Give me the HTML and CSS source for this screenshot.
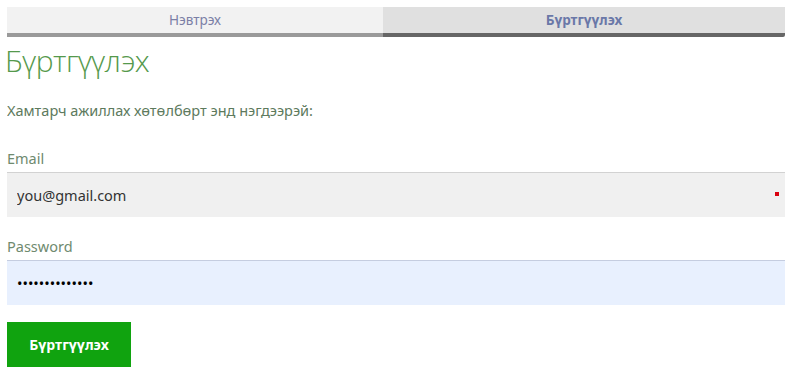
FILE: index.html
```html
<!DOCTYPE html>
<html lang="mn">
<head>
    <meta charset="UTF-8">
    <meta name="viewport" content="width=device-width, initial-scale=1.0">
    <title>Бүртгүүлэх</title>
    <link rel="stylesheet" href="styles.css">
</head>
<body>
<div class="tabs">
    <a class="tab" href="#">Нэвтрэх</a>
    <a class="tab active" href="#">Бүртгүүлэх</a>
</div>
<h1 class="title">Бүртгүүлэх</h1>
<p class="intro">Хамтарч ажиллах хөтөлбөрт энд нэгдээрэй:</p>
<form class="signup">
    <label class="label" for="email">Email</label>
    <div class="field">
        <input class="input" id="email" type="text" value="you@gmail.com">
        <span class="marker"></span>
    </div>
    <label class="label" for="password">Password</label>
    <div class="field">
        <input class="input filled" id="password" type="password" value="password123456">
    </div>
    <button class="submit" type="button">Бүртгүүлэх</button>
</form>
</body>
</html>
```

FILE: styles.css
```css
body {
    font-family: 'Noto Sans', 'Open Sans', sans-serif;
    font-size: 14.5px;
    color: #333;
    margin: 7px 5px 0 7px;
}

.tabs {
    display: flex;
}

.tab {
    flex: 376 1 0;
    height: 26px;
    line-height: 26px;
    text-align: center;
    text-decoration: none;
    font-size: 13.5px;
    color: #7b80a6;
    background: #f2f2f2;
    border-bottom: 4px solid #9a9a9a;
}

.tab.active {
    flex: 402 1 0;
    background: #e0e0e0;
    color: #6a78a8;
    font-weight: bold;
    border-bottom-color: #666;
    border-bottom-right-radius: 2px;
}

.title {
    font-family: 'Open Sans', 'Noto Sans', sans-serif;
    font-weight: 300;
    font-size: 30px;
    letter-spacing: -0.5px;
    color: #55994c;
    margin: 3px 0 0 -2px;
    line-height: 42px;
}

.intro {
    color: #5d7a5d;
    margin: 18px 0 0;
    line-height: 20px;
}

.signup {
    margin-top: 28px;
}

.label {
    display: block;
    color: #6f8a6f;
    line-height: 20px;
}

.field {
    position: relative;
    margin: 4px 0 19px;
}

.input {
    display: block;
    box-sizing: border-box;
    width: 100%;
    height: 45px;
    border: 0;
    border-top: 1px solid #d2d2d2;
    background: #f0f0f0;
    font-family: inherit;
    font-size: 14.5px;
    color: #333;
    padding: 0 10px;
    outline: none;
}

.input.filled {
    background: #e8f0fe;
    border-top-color: #c5cde0;
    color: #000;
}

.marker {
    position: absolute;
    right: 6px;
    top: 20px;
    width: 4px;
    height: 4px;
    background: #d9000f;
}

.submit {
    display: block;
    width: 124px;
    height: 45px;
    margin-top: -2px;
    border: 0;
    background: #10a30f;
    color: #fff;
    font-family: inherit;
    font-weight: bold;
    font-size: 14px;
}
```
